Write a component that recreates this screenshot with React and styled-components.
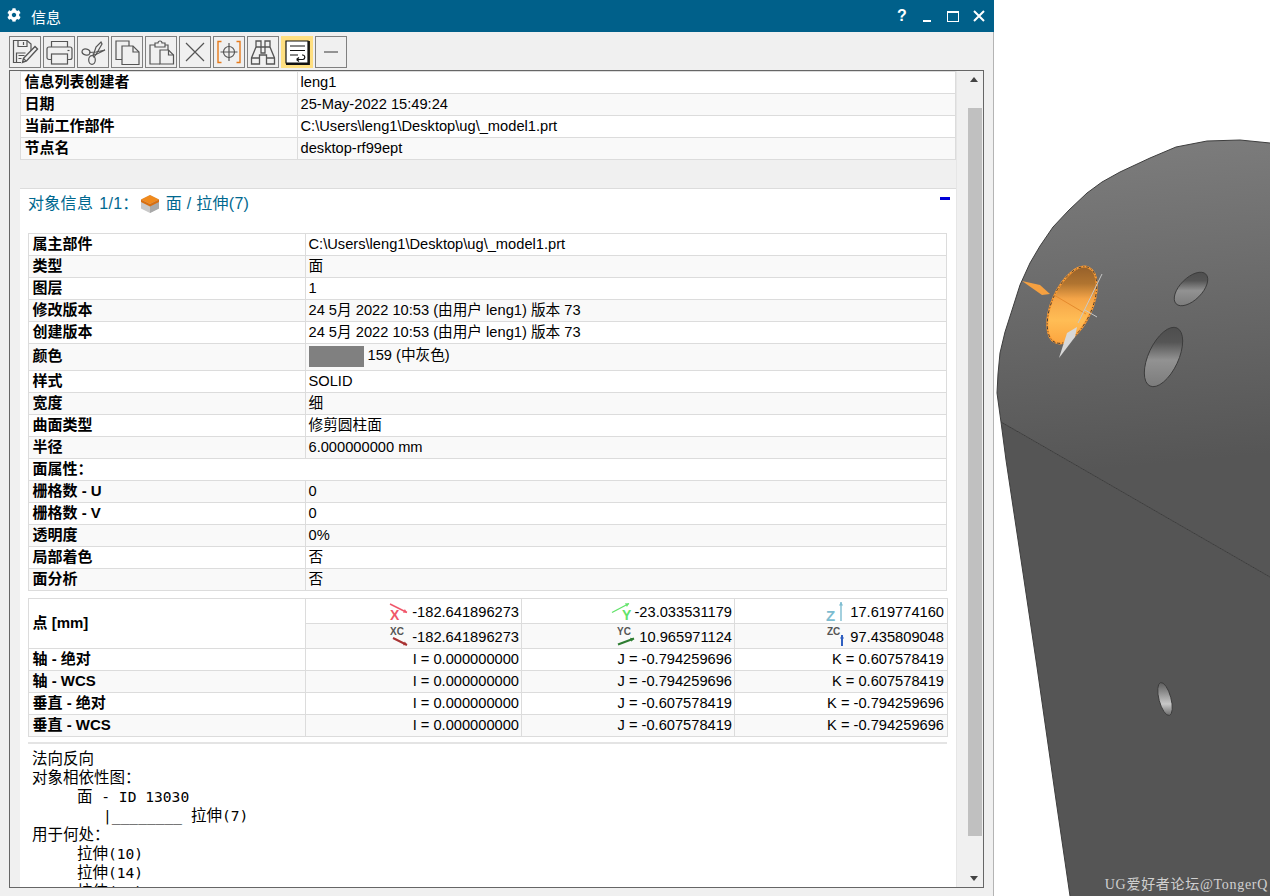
import styled, { createGlobalStyle } from 'styled-components'
import { FaCog } from 'react-icons/fa'

const GlobalStyle = createGlobalStyle`
    html, body {
        margin: 0;
        padding: 0;
        background: #fff;
    }
    #root {
        height: 896px;
        overflow: hidden;
    }
`

const infoRows = [
    ['信息列表创建者', 'leng1'],
    ['日期', '25-May-2022 15:49:24'],
    ['当前工作部件', 'C:\\Users\\leng1\\Desktop\\ug\\_model1.prt'],
    ['节点名', 'desktop-rf99ept'],
]

const pointRows = [
    ['轴 - 绝对', 'I = 0.000000000', 'J = -0.794259696', 'K = 0.607578419'],
    ['轴 - WCS', 'I = 0.000000000', 'J = -0.794259696', 'K = 0.607578419'],
    ['垂直 - 绝对', 'I = 0.000000000', 'J = -0.607578419', 'K = -0.794259696'],
    ['垂直 - WCS', 'I = 0.000000000', 'J = -0.607578419', 'K = -0.794259696'],
]

const SaveIcon = () => (
    <svg width="30" height="30" viewBox="0 0 30 30" fill="none" stroke="#555" strokeWidth="1.2">
        <path d="M21 16V7l-4-3.500H3.500v22H11" />
        <path d="M8 3.500v6h9v-6M13.500 5v3M6.500 25v-9h9M8.500 18.500h6M8.500 21.500h3" />
        <path d="M25 9.500l2.500 2.500-11 12-4 1.500 1-4.200z" fill="#f0f0f0" strokeWidth="1.4" />
        <path d="M13.500 21.500l2.700 2.600" />
    </svg>
)

const PrintIcon = () => (
    <svg width="30" height="30" viewBox="0 0 30 30" fill="none" stroke="#555" strokeWidth="1.2">
        <path d="M7.500 10V4.500h16V10" />
        <path d="M7.500 22.500H5a2 2 0 0 1-2-2V12a2 2 0 0 1 2-2h21a2 2 0 0 1 2 2v8.500a2 2 0 0 1-2 2h-2.500" />
        <rect x="7.500" y="17" width="16" height="10" />
        <path d="M23.500 13.500h2" />
    </svg>
)

const CutIcon = () => (
    <svg width="30" height="30" viewBox="0 0 30 30" fill="none" stroke="#555" strokeWidth="1.2">
        <ellipse cx="8" cy="15" rx="4" ry="3" transform="rotate(15 8 15)" />
        <ellipse cx="14" cy="23" rx="3.300" ry="4.300" />
        <path d="M11.500 15.500L18 15l9-2-9 4.500-3.500-.5" />
        <path d="M15 19l3-9 5-5 1 2-6 10.500-2.500 3" />
    </svg>
)

const CopyIcon = () => (
    <svg width="30" height="30" viewBox="0 0 30 30" fill="none" stroke="#555" strokeWidth="1.2">
        <path d="M10 22.500H4V4h13v5" />
        <path d="M10 9h11l6 6v12.500H10z" fill="#f0f0f0" />
        <path d="M21 9v6h6" />
    </svg>
)

const PasteIcon = () => (
    <svg width="30" height="30" viewBox="0 0 30 30" fill="none" stroke="#555" strokeWidth="1.2">
        <path d="M14 27H4V8h5M19 8h3v5" />
        <path d="M9 6h3a2 2 0 0 1 4 0h3v4H9z" />
        <path d="M14 13h8.500l5 5v9H14z" fill="#f0f0f0" />
        <path d="M22.500 13v5h5" />
    </svg>
)

const DeleteIcon = () => (
    <svg width="30" height="30" viewBox="0 0 30 30" stroke="#555" strokeWidth="1.2">
        <path d="M6 6l18 18M24 6L6 24" />
    </svg>
)

const TargetIcon = () => (
    <svg width="30" height="30" viewBox="0 0 30 30" fill="none" stroke="#555" strokeWidth="1.2">
        <path d="M7.500 4.500H4v21h3.500M22.500 4.500H26v21h-3.500" stroke="#e67a1a" strokeWidth="1.4" />
        <circle cx="15" cy="15" r="5.500" />
        <path d="M15 6v18M6.500 15h17" />
    </svg>
)

const FindIcon = () => (
    <svg width="30" height="30" viewBox="0 0 30 30" fill="none" stroke="#555" strokeWidth="1.3">
        <path d="M8 4h5v6h4V4h5v6l4.500 11v6H18.500v-9h-7v9H3.500v-6L8 10z" />
        <path d="M8 10h5M17 10h5M3.500 21h8M18.500 21h8M13 10v6h4v-6" />
    </svg>
)

const WrapIcon = () => (
    <svg width="30" height="30" viewBox="0 0 30 30" fill="none" stroke="#111" strokeWidth="1.2">
        <path d="M4 4h22v22H4z" fill="#fff" />
        <path d="M4 27h23V4" strokeWidth="1.8" />
        <path d="M8 9h15M8 13.500h15M8 18h8M14.500 22.500H21a2.300 2.300 0 0 0 0-4.500h-1M14.500 22.500l2.500-2M14.500 22.500l2.500 2" />
    </svg>
)

const MinusIcon = () => (
    <svg width="30" height="30" viewBox="0 0 30 30" stroke="#555" strokeWidth="1.2">
        <path d="M8 15h14" />
    </svg>
)

const tools = [
    [SaveIcon], [PrintIcon], [CutIcon], [CopyIcon], [PasteIcon],
    [DeleteIcon], [TargetIcon], [FindIcon], [WrapIcon, true], [MinusIcon],
]

// little axis marks from the point rows, coordinates are per icon
const axisMarks = {
    x: { w: 22, line: [2, 3, 19, 11.5], stroke: '#f0566a', sw: 1.4, label: 'X', lx: 2, ly: 18.5, size: 14, fill: '#f0566a' },
    y: { w: 23, line: [3, 11.5, 20, 2.5], stroke: '#62e36a', sw: 1.4, label: 'Y', lx: 13, ly: 19, size: 14, fill: '#62e36a' },
    z: { w: 23, line: [16, 20, 16, 1], stroke: '#7dbcd0', sw: 1.4, label: 'Z', lx: 1, ly: 19.5, size: 15, fill: '#7dbcd0' },
    xc: { w: 22, line: [5, 12, 19, 19], stroke: '#a83232', sw: 2, label: 'XC', lx: 2, ly: 8.5, size: 10, fill: '#555' },
    yc: { w: 23, line: [4, 18.5, 20, 12.5], stroke: '#2e7d32', sw: 2, label: 'YC', lx: 3, ly: 8.5, size: 10, fill: '#555' },
    zc: { w: 23, line: [17, 20, 17, 9], stroke: '#2f5fc0', sw: 2, label: 'ZC', lx: 2, ly: 8.5, size: 10, fill: '#555' },
}

const AxisIcon = ({ kind }) => {
    const m = axisMarks[kind]
    const [x1, y1, x2, y2] = m.line
    const a = Math.atan2(y2 - y1, x2 - x1)
    const head = [a + 2.6, a - 2.6]
        .map(t => `${x2 + 4 * Math.cos(t)},${y2 + 4 * Math.sin(t)}`)
        .join(' ')
    return (
        <svg width={m.w} height="23" viewBox={`0 0 ${m.w} 23`}>
            <line x1={x1} y1={y1} x2={x2} y2={y2} stroke={m.stroke} strokeWidth={m.sw} />
            <polygon points={`${x2},${y2} ${head}`} fill={m.stroke} />
            <text x={m.lx} y={m.ly} fontFamily="Liberation Sans" fontWeight="700" fontSize={m.size} fill={m.fill}>{m.label}</text>
        </svg>
    )
}

const FaceIcon = () => (
    <svg width="20" height="20" viewBox="0 0 20 20">
        <path d="M10 1l9 4.500v9L10 19l-9-4.500v-9z" fill="#c9c9c9" />
        <path d="M10 10l9-4.500v9L10 19z" fill="#a9a9a9" />
        <path d="M10 1l9 4.500L10 10 1 5.500z" fill="#f08a1d" />
        <path d="M1 5.500L10 10l9-4.500v2.500L10 12.500 1 8z" fill="#d96f10" />
    </svg>
)

// ellipse as a path, so the gradient stays upright whatever the tilt
const ellipsePath = (cx, cy, rx, ry, rot) => {
    const t = (rot * Math.PI) / 180
    const dx = rx * Math.cos(t)
    const dy = rx * Math.sin(t)
    return `M${cx - dx} ${cy - dy}A${rx} ${ry} ${rot} 1 1 ${cx + dx} ${cy + dy}A${rx} ${ry} ${rot} 1 1 ${cx - dx} ${cy - dy}Z`
}

const edgeTop = 'M1270 143 L1240 140 L1207 141 L1176 147 L1150 158 L1120 172 L1102 182 L1087 193 L1069 210 L1053 227 L1040 246 L1030 263 L1020 285 L1013 307 L1005 332 L1000 353 L998 374 L997 393 L1001 422'
const edgeLow = 'L1006 460 L1023 573 L1037 667 L1056 800 L1070 896'

const Model = () => (
    <svg width="276" height="896" viewBox="994 0 276 896">
        <defs>
            <linearGradient id="bodyTop" gradientUnits="userSpaceOnUse" x1="1170" y1="140" x2="1200" y2="460">
                <stop offset="0" stopColor="#7c7c7c" />
                <stop offset="1" stopColor="#565656" />
            </linearGradient>
            <linearGradient id="holeShade" x1="0" y1="0" x2="0" y2="1">
                <stop offset="0" stopColor="#4e4e4e" />
                <stop offset="0.25" stopColor="#555" />
                <stop offset="0.55" stopColor="#929292" />
                <stop offset="1" stopColor="#7c7c7c" />
            </linearGradient>
            <linearGradient id="smallHole" x1="0" y1="0" x2="0" y2="1">
                <stop offset="0" stopColor="#5c5c5c" />
                <stop offset="0.65" stopColor="#c8c8c8" />
                <stop offset="1" stopColor="#6b6b6b" />
            </linearGradient>
            <linearGradient id="faceShade" x1="0" y1="0" x2="0" y2="1">
                <stop offset="0" stopColor="#96602a" />
                <stop offset="0.22" stopColor="#b07430" />
                <stop offset="0.42" stopColor="#f5a548" />
                <stop offset="0.7" stopColor="#ffbd55" />
                <stop offset="1" stopColor="#fca53f" />
            </linearGradient>
        </defs>
        <path d={`${edgeTop} L1270 577 Z`} fill="url(#bodyTop)" />
        <path d={`M1001 422 ${edgeLow} L1270 896 L1270 577 Z`} fill="#555" />
        <path d={`${edgeTop} ${edgeLow}`} fill="none" stroke="#3e3e3e" strokeLinejoin="round" />
        <path d="M1001 422 L1270 577" stroke="#3c3c3c" fill="none" />

        <path d={ellipsePath(1191, 289, 21, 11, -45)} fill="url(#holeShade)" stroke="#3c3c3c" />
        <path d={ellipsePath(1163.5, 357, 32, 15, -65)} fill="url(#holeShade)" stroke="#3c3c3c" />
        <path d={ellipsePath(1165, 699, 17, 6, 75)} fill="url(#smallHole)" stroke="#3c3c3c" />

        <path d={ellipsePath(1072, 305, 41, 20, -66)} fill="url(#faceShade)" stroke="#ff9d33" strokeWidth="2" />
        <path d={ellipsePath(1072, 305, 41, 20, -66)} fill="none" stroke="#3a3a3a" strokeDasharray="3 2 1 2" />
        <path d="M1054 295 L1086 314" stroke="#e58a2c" />
        <path d="M1022 281 L1040 285 L1050 294 L1042 295 Z" fill="#f5a040" />
        <path d="M1102 274 L1078 323" stroke="#c8c8c8" />
        <path d="M1085 310 L1097 317" stroke="#c8c8c8" />
        <path d="M1059 358 L1067 333 L1077 327 L1075 337 Z" fill="#d8d8d8" />
    </svg>
)

const App = () => {
    return (
        <>
            <GlobalStyle />
            <Page>
                <Window>
                    <TitleBar>
                        <TitleLeft>
                            <FaCog />
                            <span>信息</span>
                        </TitleLeft>
                        <Help>?</Help>
                        <MinButton />
                        <MaxButton />
                        <CloseButton>
                            <svg width="14" height="14" viewBox="0 0 14 14" stroke="#fff" strokeWidth="2">
                                <path d="M2 2l10 10M12 2L2 12" />
                            </svg>
                        </CloseButton>
                    </TitleBar>
                    <Toolbar>
                        {tools.map(([Icon, active], i) => (
                            <ToolButton key={i} $active={active}><Icon /></ToolButton>
                        ))}
                    </Toolbar>
                    <Frame>
                        <Content>
                            <InfoTable>
                                <tbody>
                                    {infoRows.map(([label, value]) => (
                                        <Row key={label}>
                                            <LabelCell $width={277}>{label}</LabelCell>
                                            <ValueCell>{value}</ValueCell>
                                        </Row>
                                    ))}
                                </tbody>
                            </InfoTable>
                            <Card>
                                <CardHead>
                                    <HeadText>对象信息</HeadText>
                                    <HeadText>1/1：</HeadText>
                                    <FaceIcon />
                                    <HeadText>面 / 拉伸(7)</HeadText>
                                    <Collapse />
                                </CardHead>
                                <InfoTable>
                                    <tbody>
                                        <Row><LabelCell $width={277}>属主部件</LabelCell><ValueCell>C:\Users\leng1\Desktop\ug\_model1.prt</ValueCell></Row>
                                        <Row><LabelCell>类型</LabelCell><ValueCell>面</ValueCell></Row>
                                        <Row><LabelCell>图层</LabelCell><ValueCell>1</ValueCell></Row>
                                        <Row><LabelCell>修改版本</LabelCell><ValueCell>24 5月 2022 10:53 (由用户 leng1) 版本 73</ValueCell></Row>
                                        <Row><LabelCell>创建版本</LabelCell><ValueCell>24 5月 2022 10:53 (由用户 leng1) 版本 73</ValueCell></Row>
                                        <Row $tall>
                                            <LabelCell>颜色</LabelCell>
                                            <ValueCell><Swatch />159 (中灰色)</ValueCell>
                                        </Row>
                                        <Row><LabelCell>样式</LabelCell><ValueCell>SOLID</ValueCell></Row>
                                        <Row><LabelCell>宽度</LabelCell><ValueCell>细</ValueCell></Row>
                                        <Row><LabelCell>曲面类型</LabelCell><ValueCell>修剪圆柱面</ValueCell></Row>
                                        <Row><LabelCell>半径</LabelCell><ValueCell>6.000000000 mm</ValueCell></Row>
                                        <Row><LabelCell colSpan={2}>面属性：</LabelCell></Row>
                                        <Row><LabelCell>栅格数 - U</LabelCell><ValueCell>0</ValueCell></Row>
                                        <Row><LabelCell>栅格数 - V</LabelCell><ValueCell>0</ValueCell></Row>
                                        <Row><LabelCell>透明度</LabelCell><ValueCell>0%</ValueCell></Row>
                                        <Row><LabelCell>局部着色</LabelCell><ValueCell>否</ValueCell></Row>
                                        <Row><LabelCell>面分析</LabelCell><ValueCell>否</ValueCell></Row>
                                    </tbody>
                                </InfoTable>
                                <PointTable>
                                    <colgroup>
                                        <col width="277" />
                                        <col width="216" />
                                        <col width="213" />
                                        <col width="213" />
                                    </colgroup>
                                    <tbody>
                                        <PointRow>
                                            <LabelCell rowSpan={2}>点 [mm]</LabelCell>
                                            <NumberCell><NumberWrap><AxisIcon kind="x" />-182.641896273</NumberWrap></NumberCell>
                                            <NumberCell><NumberWrap><AxisIcon kind="y" />-23.033531179</NumberWrap></NumberCell>
                                            <NumberCell><NumberWrap><AxisIcon kind="z" />17.619774160</NumberWrap></NumberCell>
                                        </PointRow>
                                        <PointRow $shade>
                                            <NumberCell><NumberWrap><AxisIcon kind="xc" />-182.641896273</NumberWrap></NumberCell>
                                            <NumberCell><NumberWrap><AxisIcon kind="yc" />10.965971124</NumberWrap></NumberCell>
                                            <NumberCell><NumberWrap><AxisIcon kind="zc" />97.435809048</NumberWrap></NumberCell>
                                        </PointRow>
                                        {pointRows.map(([label, i, j, k]) => (
                                            <Row key={label}>
                                                <LabelCell>{label}</LabelCell>
                                                <NumberCell>{i}</NumberCell>
                                                <NumberCell>{j}</NumberCell>
                                                <NumberCell>{k}</NumberCell>
                                            </Row>
                                        ))}
                                    </tbody>
                                </PointTable>
                                <Rule />
                                <Listing>
                                    <Line><Cjk>法向反向</Cjk></Line>
                                    <Line><Cjk>对象相依性图：</Cjk></Line>
                                    <Line $indent={45}><Cjk>面</Cjk> - ID 13030</Line>
                                    <Line $indent={71}>|________ <Cjk>拉伸</Cjk>(7)</Line>
                                    <Line><Cjk>用于何处：</Cjk></Line>
                                    <Line $indent={45}><Cjk>拉伸</Cjk>(10)</Line>
                                    <Line $indent={45}><Cjk>拉伸</Cjk>(14)</Line>
                                    <Line $indent={45}><Cjk>拉伸</Cjk>(18)</Line>
                                </Listing>
                            </Card>
                        </Content>
                        <Scrollbar>
                            <ArrowUp />
                            <Thumb />
                            <ArrowDown />
                        </Scrollbar>
                    </Frame>
                </Window>
                <Scene>
                    <Model />
                    <Watermark>UG爱好者论坛@TongerQ</Watermark>
                </Scene>
            </Page>
        </>
    )
}
export default App

const Page = styled.div`
    display: flex;
    width: 1270px;
    height: 896px;
    overflow: hidden;
    font-family: "Liberation Sans", "Noto Sans CJK SC", sans-serif;
    font-size: 14.67px;
    color: #000;
`
const Window = styled.div`
    width: 994px;
    height: 896px;
    box-sizing: border-box;
    flex-shrink: 0;
    display: flex;
    flex-direction: column;
    background-color: #f0f0f0;
    border-right: 1px solid #b4b4b4;
`
const TitleBar = styled.div`
    height: 32px;
    flex-shrink: 0;
    display: flex;
    align-items: center;
    margin-right: -1px;
    padding: 0 8px 0 7px;
    background-color: #00608a;
    color: #fff;
`
const TitleLeft = styled.div`
    flex: 1;
    display: flex;
    align-items: center;
    gap: 10px;
    font-size: 15px;
    svg {
        font-size: 14px;
        margin-top: -3px;
    }
`
const Help = styled.div`
    width: 14px;
    margin-right: 14px;
    font-weight: 700;
    font-size: 16px;
    text-align: center;
`
const MinButton = styled.div`
    width: 8px;
    height: 2px;
    margin: 10px 16px 0 0;
    background-color: #fff;
`
const MaxButton = styled.div`
    width: 12px;
    height: 11px;
    box-sizing: border-box;
    margin-right: 13px;
    border: 1px solid #fff;
    border-top-width: 2px;
`
const CloseButton = styled.div`
    display: flex;
    width: 14px;
    height: 14px;
`
const Toolbar = styled.div`
    height: 38px;
    box-sizing: border-box;
    flex-shrink: 0;
    display: flex;
    gap: 2px;
    padding: 4px 0 2px 9px;
`
const ToolButton = styled.div`
    width: 32px;
    height: 32px;
    box-sizing: border-box;
    border: 1px solid ${p => (p.$active ? '#ffdf80' : '#808080')};
    background-color: ${p => (p.$active ? '#ffdf80' : '#f0f0f0')};
    svg {
        display: block;
    }
`
const Frame = styled.div`
    width: 975px;
    height: 818px;
    box-sizing: border-box;
    margin-left: 9px;
    display: flex;
    border: 1px solid #666;
    overflow: hidden;
`
const Content = styled.div`
    width: 946px;
    flex-shrink: 0;
    box-sizing: border-box;
    padding-left: 10px;
    overflow: hidden;
`
const InfoTable = styled.table`
    width: 100%;
    table-layout: fixed;
    border-collapse: collapse;
`
const PointTable = styled(InfoTable)`
    margin-top: 7px;
`
const Row = styled.tr`
    height: ${p => (p.$tall ? '27px' : '22px')};
    background-color: #fff;
    &:nth-child(even) {
        background-color: #f9f9f9;
    }
`
const PointRow = styled.tr`
    height: 25px;
    background-color: ${p => (p.$shade ? '#f9f9f9' : '#fff')};
`
const cellBorder = '1px solid #dcdcdc'
const LabelCell = styled.td`
    box-sizing: border-box;
    width: ${p => (p.$width ? `${p.$width}px` : 'auto')};
    padding: 0 3px 2px 3.500px;
    border: ${cellBorder};
    font-weight: 700;
    font-size: 15px;
    line-height: 18px;
    white-space: nowrap;
`
const ValueCell = styled.td`
    padding: 0 3px 2px 2.500px;
    border: ${cellBorder};
    line-height: 18px;
    white-space: nowrap;
`
const NumberCell = styled.td`
    padding: 0 2px 2px 0;
    border: ${cellBorder};
    text-align: right;
    line-height: 18px;
    white-space: nowrap;
    &:last-child {
        padding-right: 3px;
    }
`
const NumberWrap = styled.div`
    display: flex;
    justify-content: flex-end;
    align-items: center;
    gap: 2px;
    height: 18px;
    padding-top: 4px;
`
const Swatch = styled.span`
    display: inline-block;
    width: 55px;
    height: 21px;
    margin-right: 4px;
    vertical-align: middle;
    background-color: #808080;
`
const Card = styled.div`
    margin-top: 28px;
    padding: 0 9px 40px 8px;
    background-color: #fff;
    border-top: 1px solid #dcdcdc;
`
const CardHead = styled.div`
    position: relative;
    height: 44px;
    box-sizing: border-box;
    display: flex;
    align-items: flex-start;
    gap: 6px;
    padding: 5px 0 0 0;
    color: #00688f;
    svg {
        margin-left: -5px;
    }
`
const HeadText = styled.span`
    font-size: 16px;
    line-height: 20px;
    letter-spacing: 0.300px;
`
const Collapse = styled.div`
    position: absolute;
    top: 8px;
    right: -3px;
    width: 10px;
    height: 3px;
    background-color: #0000d8;
`
const Rule = styled.div`
    height: 2px;
    margin-top: 5px;
    background-color: #e4e4e4;
`
const Listing = styled.div`
    padding: 5px 0 0 4px;
    font-family: "DejaVu Sans Mono", "Noto Sans CJK SC", monospace;
    font-size: 14.600px;
`
const Line = styled.div`
    height: 19px;
    line-height: 19px;
    padding-left: ${p => p.$indent || 0}px;
    white-space: pre;
`
const Cjk = styled.span`
    font-size: 15.500px;
`
const Scrollbar = styled.div`
    flex: 1;
    position: relative;
    display: flex;
    flex-direction: column;
    align-items: flex-start;
    padding-top: 37px;
    padding-left: 11px;
    border-left: 1px solid #e6e6e6;
`
const Thumb = styled.div`
    width: 14px;
    height: 728px;
    background-color: #c0c0c0;
`
const ArrowUp = styled.div`
    position: absolute;
    top: 6px;
    left: 13px;
    border-left: 4px solid transparent;
    border-right: 4px solid transparent;
    border-bottom: 5px solid #444;
`
const ArrowDown = styled.div`
    position: absolute;
    bottom: 6px;
    left: 13px;
    border-left: 4px solid transparent;
    border-right: 4px solid transparent;
    border-top: 5px solid #444;
`
const Scene = styled.div`
    position: relative;
    flex: 1;
    svg {
        display: block;
    }
`
const Watermark = styled.div`
    position: absolute;
    right: 2px;
    bottom: 3px;
    font-family: "Liberation Serif", "Noto Sans CJK SC", serif;
    font-size: 14px;
    line-height: 16px;
    letter-spacing: 0.700px;
    color: #d0d0d0;
    white-space: nowrap;
`
